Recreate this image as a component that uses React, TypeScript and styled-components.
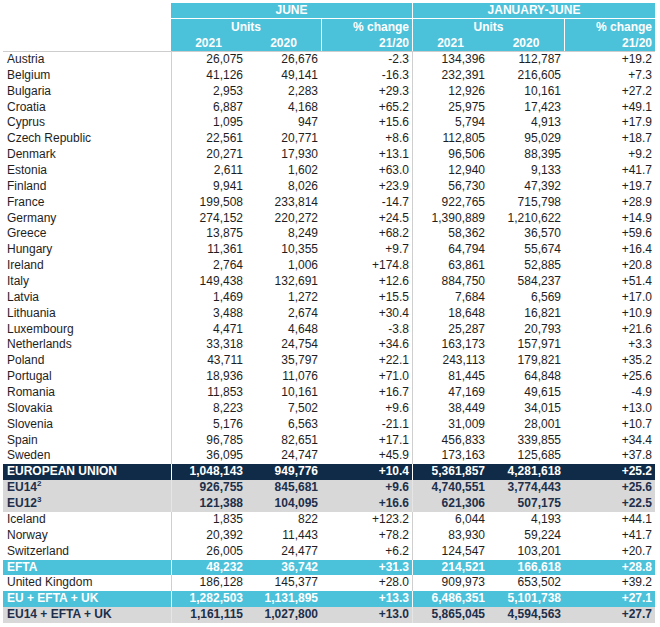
import React from "react";
import styled, { createGlobalStyle, css } from "styled-components";

const GlobalStyle = createGlobalStyle`
  html, body {
    margin: 0;
    padding: 0;
    background: #ffffff;
  }
  body {
    font-family: "Liberation Sans", Arial, Helvetica, sans-serif;
    font-size: 12px;
    color: #1e1e1e;
  }
`;

const CYAN = "#4cc1da";
const NAVY = "#0f2b47";
const GREY = "#d8d8d8";
const GREY_TEXT = "#1d2f4b";
const COLS = "168px 75px 75px 91px 76px 76px 91px";

type Variant = "plain" | "navy" | "grey" | "cyan";

const Page = styled.div`
  padding: 3px 5px 4px 3px;
  width: 652px;
`;

const Header = styled.div`
  display: grid;
  grid-template-columns: ${COLS};
  grid-template-rows: 16px 16px 16px;
  color: #ffffff;
  font-weight: bold;
  line-height: 15px;
`;

const Blank = styled.div`
  grid-column: 1;
  grid-row: 1 / 4;
  background: #ffffff;
`;

const Period = styled.div<{ $col: string; $divider?: boolean }>`
  grid-column: ${(p) => p.$col};
  grid-row: 1;
  background: ${CYAN};
  border-bottom: 1px solid #ffffff;
  ${(p) => p.$divider && "border-left: 1px solid #ffffff;"}
  text-align: center;
  line-height: 15px;
`;

const HeadCell = styled.div<{ $col: string; $row: string; $align?: "center" | "right"; $divider?: boolean }>`
  grid-column: ${(p) => p.$col};
  grid-row: ${(p) => p.$row};
  background: ${CYAN};
  text-align: ${(p) => p.$align ?? "center"};
  padding-right: ${(p) => (p.$align === "right" ? "3px" : "0")};
  ${(p) => p.$divider && "border-left: 1px solid #ffffff;"}
  line-height: 16px;
`;

const Body = styled.div`
  border-top: 1px solid #cdcdcd;
`;

const Row = styled.div<{ $variant: Variant }>`
  display: grid;
  grid-template-columns: ${COLS};
  height: 15.86px;
  line-height: 15.86px;
  white-space: nowrap;
  ${(p) =>
    p.$variant === "navy" &&
    css`
      background: ${NAVY};
      color: #ffffff;
      font-weight: bold;
    `}
  ${(p) =>
    p.$variant === "grey" &&
    css`
      background: ${GREY};
      color: ${GREY_TEXT};
      font-weight: bold;
    `}
  ${(p) =>
    p.$variant === "cyan" &&
    css`
      background: ${CYAN};
      color: #ffffff;
      font-weight: bold;
    `}
`;

const Label = styled.div`
  padding-left: 4px;
  overflow: hidden;
`;

const Num = styled.div<{ $divider?: boolean; $variant: Variant }>`
  text-align: right;
  padding-right: 3px;
  ${(p) =>
    p.$divider &&
    css`
      border-left: 1px solid ${p.$variant === "plain" ? "#cfcfcf" : p.$variant === "grey" ? "#e6e6e6" : "#ffffff"};
    `}
`;

const Sup = styled.sup`
  font-size: 8px;
  line-height: 0;
  vertical-align: 5px;
`;

type RowData = {
  label: React.ReactNode;
  v: string[];
  variant?: Variant;
};

const rows: RowData[] = [
  { label: "Austria", v: ["26,075", "26,676", "-2.3", "134,396", "112,787", "+19.2"] },
  { label: "Belgium", v: ["41,126", "49,141", "-16.3", "232,391", "216,605", "+7.3"] },
  { label: "Bulgaria", v: ["2,953", "2,283", "+29.3", "12,926", "10,161", "+27.2"] },
  { label: "Croatia", v: ["6,887", "4,168", "+65.2", "25,975", "17,423", "+49.1"] },
  { label: "Cyprus", v: ["1,095", "947", "+15.6", "5,794", "4,913", "+17.9"] },
  { label: "Czech Republic", v: ["22,561", "20,771", "+8.6", "112,805", "95,029", "+18.7"] },
  { label: "Denmark", v: ["20,271", "17,930", "+13.1", "96,506", "88,395", "+9.2"] },
  { label: "Estonia", v: ["2,611", "1,602", "+63.0", "12,940", "9,133", "+41.7"] },
  { label: "Finland", v: ["9,941", "8,026", "+23.9", "56,730", "47,392", "+19.7"] },
  { label: "France", v: ["199,508", "233,814", "-14.7", "922,765", "715,798", "+28.9"] },
  { label: "Germany", v: ["274,152", "220,272", "+24.5", "1,390,889", "1,210,622", "+14.9"] },
  { label: "Greece", v: ["13,875", "8,249", "+68.2", "58,362", "36,570", "+59.6"] },
  { label: "Hungary", v: ["11,361", "10,355", "+9.7", "64,794", "55,674", "+16.4"] },
  { label: "Ireland", v: ["2,764", "1,006", "+174.8", "63,861", "52,885", "+20.8"] },
  { label: "Italy", v: ["149,438", "132,691", "+12.6", "884,750", "584,237", "+51.4"] },
  { label: "Latvia", v: ["1,469", "1,272", "+15.5", "7,684", "6,569", "+17.0"] },
  { label: "Lithuania", v: ["3,488", "2,674", "+30.4", "18,648", "16,821", "+10.9"] },
  { label: "Luxembourg", v: ["4,471", "4,648", "-3.8", "25,287", "20,793", "+21.6"] },
  { label: "Netherlands", v: ["33,318", "24,754", "+34.6", "163,173", "157,971", "+3.3"] },
  { label: "Poland", v: ["43,711", "35,797", "+22.1", "243,113", "179,821", "+35.2"] },
  { label: "Portugal", v: ["18,936", "11,076", "+71.0", "81,445", "64,848", "+25.6"] },
  { label: "Romania", v: ["11,853", "10,161", "+16.7", "47,169", "49,615", "-4.9"] },
  { label: "Slovakia", v: ["8,223", "7,502", "+9.6", "38,449", "34,015", "+13.0"] },
  { label: "Slovenia", v: ["5,176", "6,563", "-21.1", "31,009", "28,001", "+10.7"] },
  { label: "Spain", v: ["96,785", "82,651", "+17.1", "456,833", "339,855", "+34.4"] },
  { label: "Sweden", v: ["36,095", "24,747", "+45.9", "173,163", "125,685", "+37.8"] },
  { label: "EUROPEAN UNION", v: ["1,048,143", "949,776", "+10.4", "5,361,857", "4,281,618", "+25.2"], variant: "navy" },
  { label: <>EU14<Sup>2</Sup></>, v: ["926,755", "845,681", "+9.6", "4,740,551", "3,774,443", "+25.6"], variant: "grey" },
  { label: <>EU12<Sup>3</Sup></>, v: ["121,388", "104,095", "+16.6", "621,306", "507,175", "+22.5"], variant: "grey" },
  { label: "Iceland", v: ["1,835", "822", "+123.2", "6,044", "4,193", "+44.1"] },
  { label: "Norway", v: ["20,392", "11,443", "+78.2", "83,930", "59,224", "+41.7"] },
  { label: "Switzerland", v: ["26,005", "24,477", "+6.2", "124,547", "103,201", "+20.7"] },
  { label: "EFTA", v: ["48,232", "36,742", "+31.3", "214,521", "166,618", "+28.8"], variant: "cyan" },
  { label: "United Kingdom", v: ["186,128", "145,377", "+28.0", "909,973", "653,502", "+39.2"] },
  { label: "EU + EFTA + UK", v: ["1,282,503", "1,131,895", "+13.3", "6,486,351", "5,101,738", "+27.1"], variant: "cyan" },
  { label: "EU14 + EFTA + UK", v: ["1,161,115", "1,027,800", "+13.0", "5,865,045", "4,594,563", "+27.7"], variant: "grey" },
];

export default function App() {
  return (
    <>
      <GlobalStyle />
      <Page>
        <Header>
          <Blank />
          <Period $col="2 / 5">JUNE</Period>
          <Period $col="5 / 8" $divider>JANUARY-JUNE</Period>

          <HeadCell $col="2 / 4" $row="2">Units</HeadCell>
          <HeadCell $col="2" $row="3">2021</HeadCell>
          <HeadCell $col="3" $row="3">2020</HeadCell>
          <HeadCell $col="4" $row="2 / 4" $align="right" $divider>
            % change
            <br />
            21/20
          </HeadCell>

          <HeadCell $col="5 / 7" $row="2" $divider>Units</HeadCell>
          <HeadCell $col="5" $row="3" $divider>2021</HeadCell>
          <HeadCell $col="6" $row="3">2020</HeadCell>
          <HeadCell $col="7" $row="2 / 4" $align="right" $divider>
            % change
            <br />
            21/20
          </HeadCell>
        </Header>
        <Body>
          {rows.map((r, i) => {
            const variant = r.variant ?? "plain";
            return (
              <Row key={i} $variant={variant}>
                <Label>{r.label}</Label>
                {r.v.map((val, j) => (
                  <Num key={j} $variant={variant} $divider={j === 0 || j === 3}>
                    {val}
                  </Num>
                ))}
              </Row>
            );
          })}
        </Body>
      </Page>
    </>
  );
}
